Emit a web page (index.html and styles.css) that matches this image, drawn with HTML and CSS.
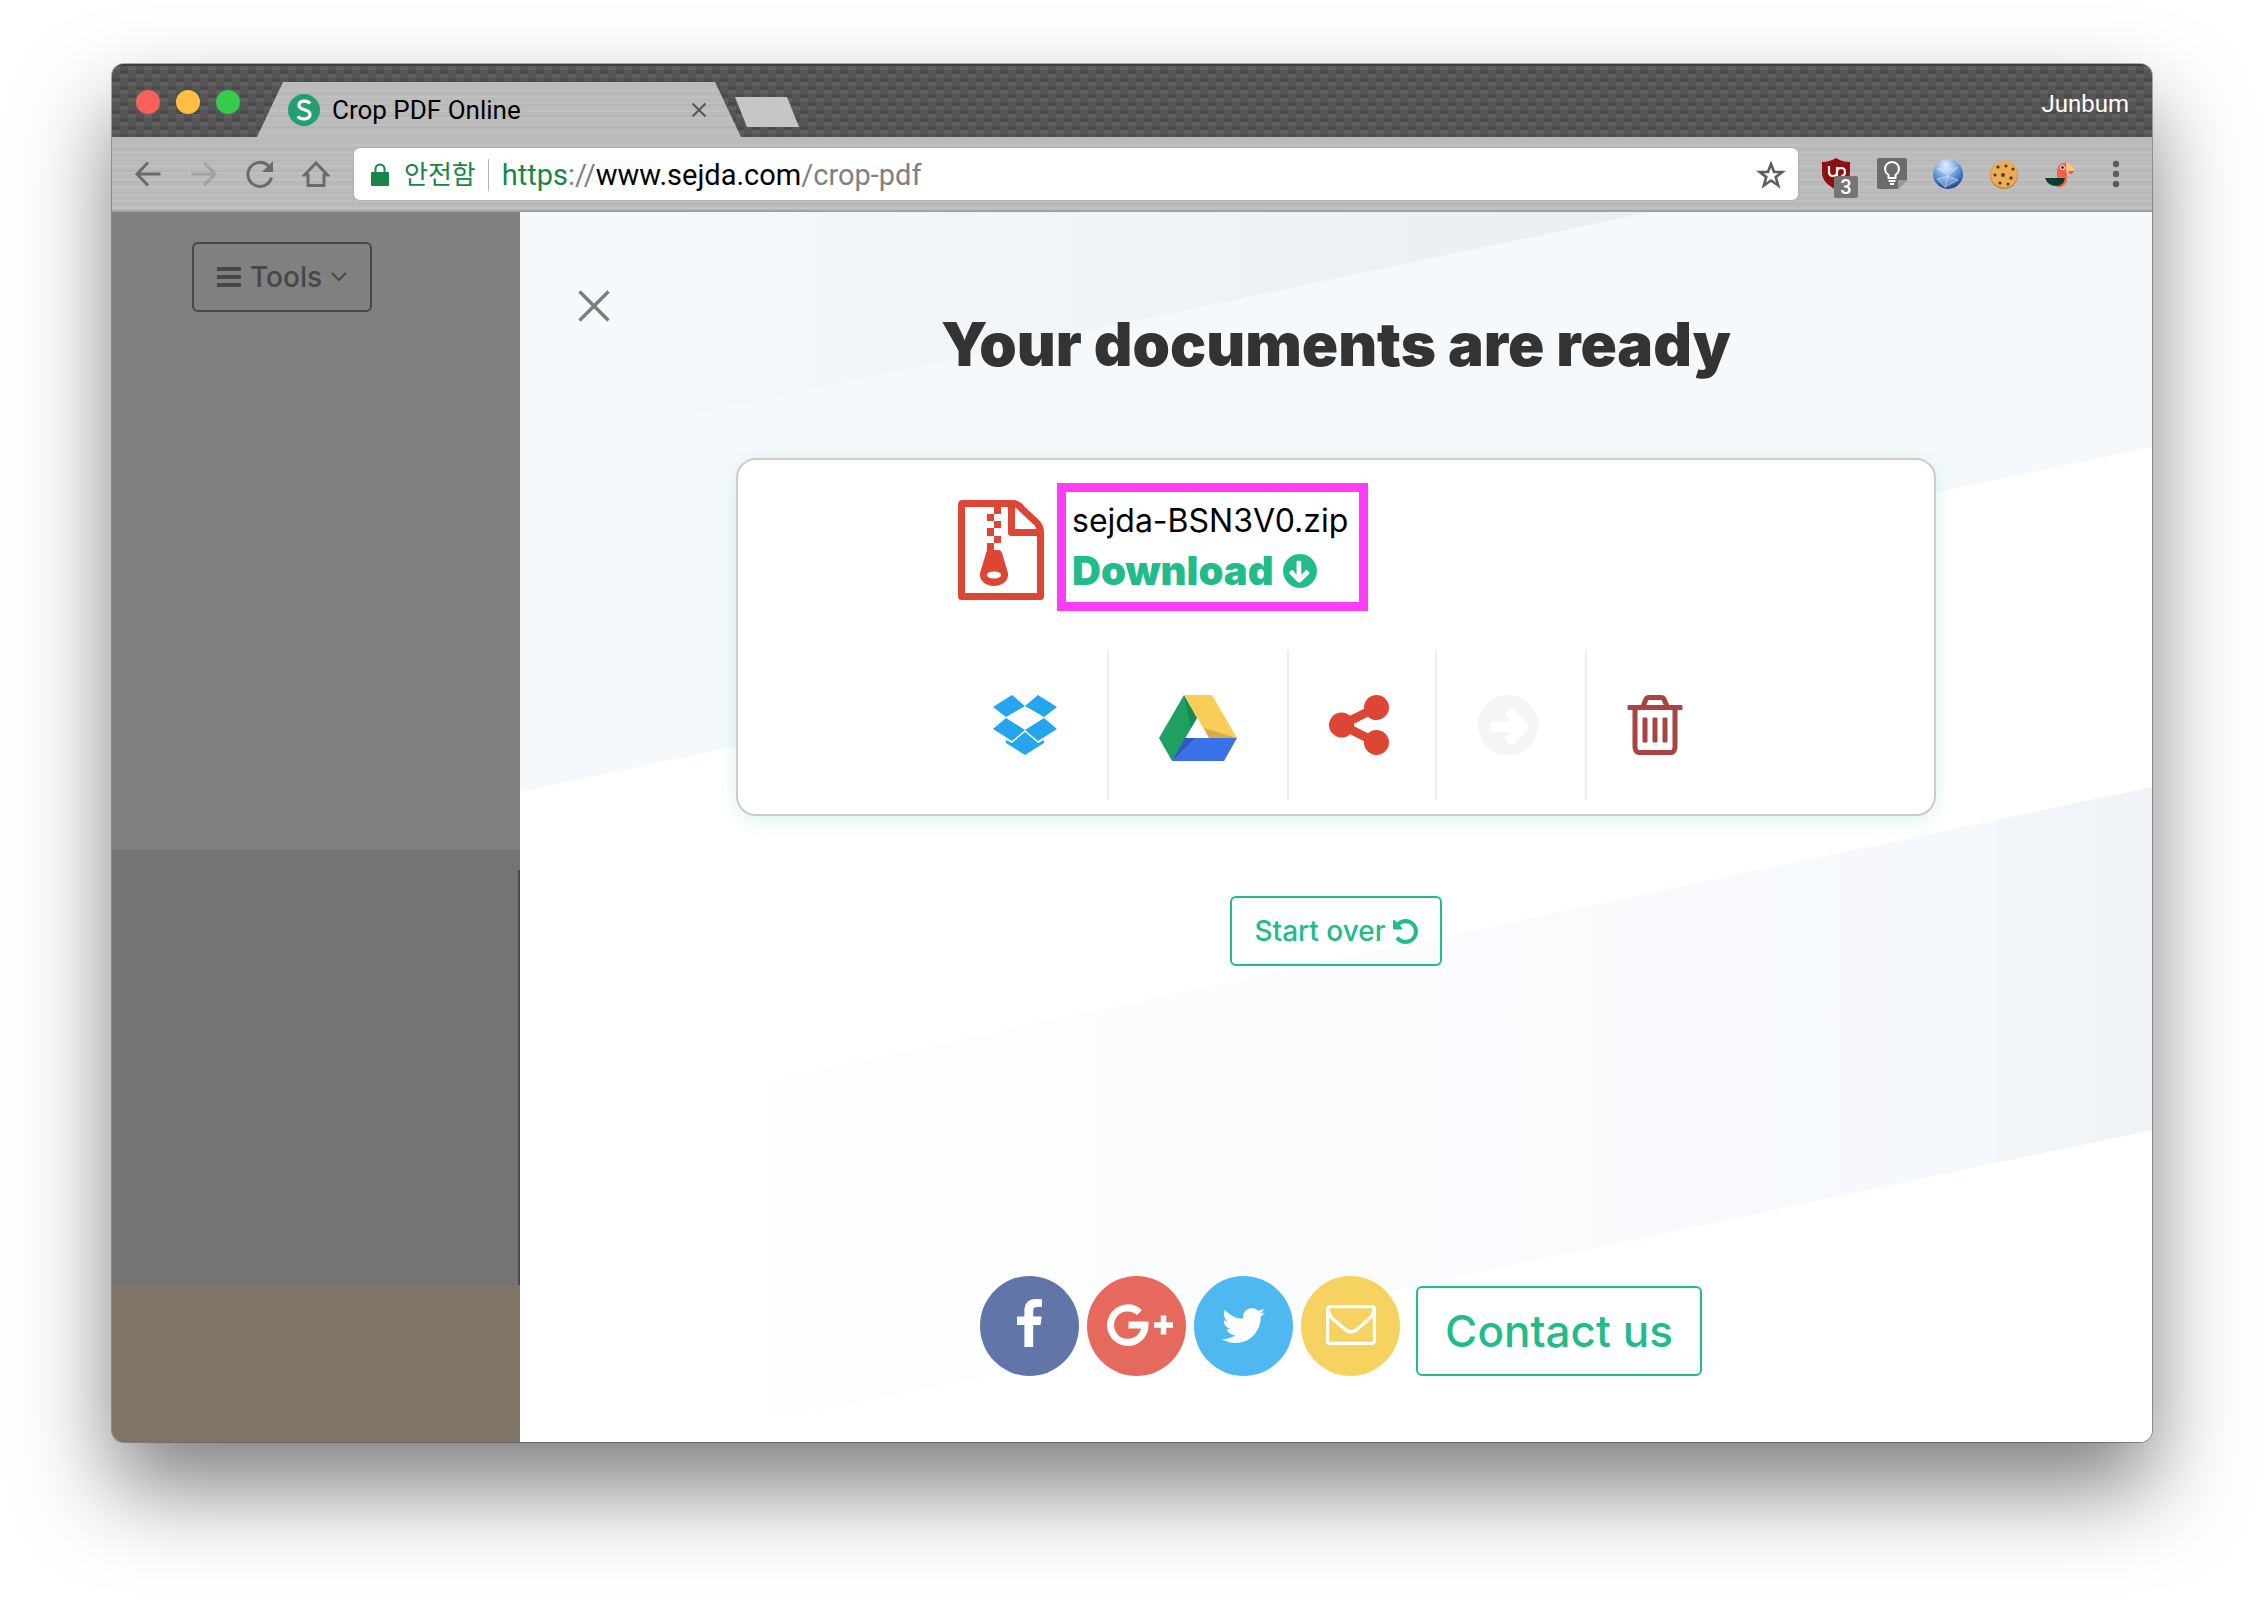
FILE: index.html
```html
<!DOCTYPE html>
<html lang="ko">
<head>
<meta charset="utf-8">
<meta name="viewport" content="width=device-width, initial-scale=1">
<title>Crop PDF Online</title>
<link rel="stylesheet" href="styles.css">
</head>
<body>
<div class="window">
  <header class="tabstrip">
    <div class="lights">
      <button class="light light-close" aria-label="Close window"></button>
      <button class="light light-min" aria-label="Minimize window"></button>
      <button class="light light-max" aria-label="Maximize window"></button>
    </div>
    <div class="tab metal">
      <svg class="favicon" viewBox="0 0 32 32" aria-hidden="true"><circle cx="16" cy="16" r="16" fill="#239f72"/><path d="M22 9.500C19.500 6 11 6 11 11.300C11 17 22 14.500 22 20.300C22 26 12.500 26 10 22.300" fill="none" stroke="#fff" stroke-width="3.200"/></svg>
      <span class="tab-title">Crop PDF Online</span>
      <button class="tab-close" aria-label="Close tab"><svg width="16" height="16" viewBox="0 0 16 16"><path d="M1.500 1.500l13 13M14.500 1.500l-13 13" stroke="#555" stroke-width="2" fill="none"/></svg></button>
    </div>
    <button class="new-tab" aria-label="New tab"></button>
    <span class="profile">Junbum</span>
  </header>

  <nav class="toolbar metal" aria-label="Browser">
    <div class="nav-buttons">
      <button class="nav-btn" aria-label="Back"><svg width="28" height="28" viewBox="0 0 28 28"><path d="M14 2.500L3 14l11 11.500M3 14h23.500"/></svg></button>
      <button class="nav-btn nav-off" aria-label="Forward"><svg width="28" height="28" viewBox="0 0 28 28"><path d="M14 2.500L25 14 14 25.500M25 14H1.500"/></svg></button>
      <button class="nav-btn" aria-label="Reload"><svg width="28" height="28" viewBox="0 0 28 28"><path d="M25.500 17.500A12 12 0 1 1 22.500 6"/><path d="M27 1v11H16z" fill="#6b6b6b" stroke="none"/></svg></button>
      <button class="nav-btn" aria-label="Home"><svg width="28" height="28" viewBox="0 0 28 28"><path d="M14 3L2.500 15H6v10.500h16V15h3.500z"/></svg></button>
    </div>
    <div class="omnibox">
      <svg width="18" height="24" viewBox="0 0 18 24" aria-hidden="true"><rect y="9" width="18" height="14" rx="1" fill="#1a8549"/><path d="M4.500 10V6a4.500 4.500 0 0 1 9 0v4" fill="none" stroke="#1a8549" stroke-width="2"/></svg>
      <span class="secure">안전함</span>
      <span class="url"><span class="url-scheme">https</span>://<span class="url-host">www.sejda.com</span>/crop-pdf</span>
      <button class="star" aria-label="Bookmark"><svg width="30" height="30" viewBox="0 0 30 30"><path d="M15 4l3.100 8h8.200l-6.600 5.100 2.500 8.400L15 20.500l-7.200 5 2.500-8.400L3.700 12h8.200z" fill="none" stroke="#5c5c5c" stroke-width="2.600"/></svg></button>
    </div>
    <div class="extensions">
      <button class="ext" aria-label="uBlock"><svg width="32" height="32" viewBox="0 0 32 32"><path d="M2 4q8 0 14-4q6 4 14 4v10c0 9-6 13-14 18C8 27 2 23 2 14z" fill="#8f100e"/><path d="M9 8v6q0 4 4 4t4-4V9v12M17 14q0-4 4-4t4 4-4 4" fill="none" stroke="#fff" stroke-width="2.200"/></svg><span class="badge">3</span></button>
      <button class="ext" aria-label="Keep"><svg width="32" height="32" viewBox="0 0 32 32"><path d="M3 0h26a2 2 0 0 1 2 2v20l-9 9H3a2 2 0 0 1-2-2V2a2 2 0 0 1 2-2z" fill="#6c6c6c"/><path d="M22 31v-9h9z" fill="#999"/><path d="M12.500 20v-3a7 7 0 1 1 7 0v3zM12.500 23h7M14 26h4" fill="none" stroke="#fff" stroke-width="2"/></svg></button>
      <button class="ext" aria-label="Globe"><svg width="32" height="32" viewBox="0 0 32 32"><defs><radialGradient id="globe" cx=".42" cy=".2" r=".85"><stop offset="0" stop-color="#e6f3ff"/><stop offset=".5" stop-color="#6d9fdf"/><stop offset="1" stop-color="#143a85"/></radialGradient></defs><circle cx="16" cy="16" r="15" fill="url(#globe)"/><path d="M5 10l11 8 10-9M16 18l-3 11M16 18l10 4-13 7-8-8 11-3" fill="#fff" fill-opacity=".25" stroke="#d4e7fa" stroke-opacity=".6"/></svg></button>
      <button class="ext" aria-label="Cookies"><svg width="32" height="32" viewBox="0 0 32 32"><circle cx="16" cy="17" r="14" fill="#c98630"/><circle cx="16" cy="16" r="13.500" fill="#eaad5a"/><g fill="#5e3515"><circle cx="10" cy="9" r="1.600"/><circle cx="18" cy="8" r="1.500"/><circle cx="25" cy="11" r="1.600"/><circle cx="15" cy="17" r="1.900"/><circle cx="7" cy="17" r="1.500"/><circle cx="23" cy="20" r="1.700"/><circle cx="12" cy="25" r="1.600"/><circle cx="20" cy="26" r="1.500"/></g></svg></button>
      <button class="ext" aria-label="Parrot"><svg width="32" height="32" viewBox="0 0 32 32"><path d="M13 29V13a8 8 0 0 1 10-8v16a8 8 0 0 1-10 8z" fill="#ff6240"/><path d="M22 5q8 0 8 9h-8z" fill="#ffbf85"/><path d="M24 13h6q-1 3-4 3z" fill="#f4503a"/><path d="M1 20h20q-1 8-9 8T1 20z" fill="#063f31"/><circle cx="18.500" cy="9.500" r="2" fill="#333" stroke="#fff"/></svg></button>
      <button class="ext" aria-label="Menu"><svg width="32" height="32" viewBox="0 0 32 32"><g fill="#5b5b5b"><circle cx="16" cy="6" r="3.200"/><circle cx="16" cy="16" r="3.200"/><circle cx="16" cy="26" r="3.200"/></g></svg></button>
    </div>
  </nav>

  <div class="page">
    <aside class="backdrop">
      <div class="backdrop-top">
        <button class="tools"><svg width="24" height="22" viewBox="0 0 24 22" aria-hidden="true"><path d="M0 3h24M0 11h24M0 19h24" stroke="#474747" stroke-width="4"/></svg>Tools<svg width="16" height="10" viewBox="0 0 16 10" aria-hidden="true"><path d="M1 1l7 7 7-7" fill="none" stroke="#474747" stroke-width="2"/></svg></button>
      </div>
      <div class="backdrop-mid"></div>
      <div class="backdrop-foot"></div>
    </aside>

    <main class="panel">
      <svg class="stripes" viewBox="0 0 1632 1230" preserveAspectRatio="none" aria-hidden="true">
        <defs>
          <linearGradient id="fadeTop" gradientUnits="userSpaceOnUse" x1="80" y1="0" x2="1130" y2="0"><stop offset="0" stop-color="#f5f9fc"/><stop offset="1" stop-color="#eaedf2"/></linearGradient>
          <linearGradient id="fadeLow" gradientUnits="userSpaceOnUse" x1="150" y1="0" x2="1632" y2="0"><stop offset="0" stop-color="#fff"/><stop offset=".5" stop-color="#fafbfd"/><stop offset=".895" stop-color="#f5f8fc"/><stop offset=".895" stop-color="#f2f5fa"/><stop offset="1" stop-color="#eff3f8"/></linearGradient>
        </defs>
        <path d="M0 0H1632V235L0 580z" fill="#f5f9fc"/>
        <path d="M0 0H1130L80 222H0z" fill="url(#fadeTop)"/>
        <path d="M1632 575V918L0 1263V920z" fill="url(#fadeLow)"/>
      </svg>
      <button class="dismiss" aria-label="Close"><svg width="32" height="32" viewBox="0 0 32 32"><path d="M1.500 1.500l29 29M30.500 1.500l-29 29" stroke="#7d7d7d" stroke-width="3.500"/></svg></button>

      <h1 class="heading">Your documents are ready</h1>

      <section class="card">
        <div class="file">
          <svg class="file-icon" width="86" height="106" viewBox="0 -6 86 106" aria-hidden="true">
            <path d="M4 3.500H56Q60 4 64 9L79 23Q82.500 27 82.500 32V96.500H3.500V4z" fill="none" stroke="#dd4534" stroke-width="7" stroke-linejoin="round"/>
            <path d="M53.500 4V32.500H82" fill="none" stroke="#dd4534" stroke-width="7" stroke-linejoin="round"/>
            <path d="M36 7h7v7h-7zM29 14h7v7h-7zM36 21h7v7h-7zM29 28h7v8h-7zM36 36h7v7h-7zM29 43h7v7h-7z" fill="#dd4534"/>
            <path d="M29 50h12q2 0 3 3l6 20c1 8-6 13-14 13s-15-5-14-13zM36 71.500c-4 0-7 1.500-7 3.500s3 3.500 7 3.500 7-1.500 7-3.500-3-3.500-7-3.500z" fill="#dd4534" fill-rule="evenodd"/>
          </svg>
          <div class="file-box">
            <div class="file-name">sejda-BSN3V0.zip</div>
            <a class="download" href="#download">Download<svg width="34" height="34" viewBox="128 128 1536 1536" aria-hidden="true"><path transform="rotate(90 896 896)" fill="#22bb8a" d="M1413 896q0-27-18-45l-362-362q-18-18-45-18t-45 18l-70 70q-18 18-18 45t18 45l190 190h-570q-26 0-45 19t-19 45v86q0 26 19 45t45 19h570l-190 150q-18 18-18 45t18 45l70 70q18 18 45 18t45-18l362-362q18-18 18-45zm251 0q0 209-103 385.500t-279.500 279.500-385.500 103-385.500-103-279.500-279.500-103-385.500 103-385.500 279.500-279.500 385.500-103 385.500 103 279.500 279.500 103 385.500z"/></svg></a>
          </div>
        </div>
        <div class="actions">
          <button class="action action-wide" aria-label="Save to Dropbox"><svg width="64" height="60" viewBox="0 0 64 60"><path fill="#24a5ee" d="M19 0L32 11 13 22 0 12zM45 0L32 11 51 22 64 12zM13 23L32 35 19 46 0 34zM51 23L32 35 45 46 64 34zM32 37L45 48 51 45V48L32 60 13 48V45L19 48z"/></svg></button>
          <button class="action action-wide" aria-label="Save to Google Drive"><svg width="78" height="60" viewBox="0 4 78 60" overflow="visible"><path fill="#1fa060" d="M25 4l13 23-25 43L0 47z"/><path fill="#16804c" fill-opacity=".7" d="M25 4l13 23-6 10z"/><path fill="#f8cd58" d="M25 4h28l25 43H50z"/><path fill="#d7ad48" d="M45 37l33 10H50z"/><path fill="#3972e8" d="M26 47h52L65 70H13z"/><path fill="#2b59bd" d="M26 47h10L13 70z"/></svg></button>
          <button class="action" aria-label="Share"><svg width="60" height="60" viewBox="128 128 1536 1536"><path fill="#dd4534" d="M1344 1024q133 0 226.500 93.500t93.500 226.500-93.500 226.500-226.500 93.500-226.500-93.500-93.500-226.500q0-12 2-34l-360-180q-92 86-218 86-133 0-226.500-93.500t-93.500-226.500 93.500-226.500 226.500-93.500q126 0 218 86l360-180q-2-22-2-34 0-133 93.500-226.500t226.500-93.500 226.500 93.500 93.500 226.500-93.500 226.500-226.500 93.500q-126 0-218-86l-360 180q2 22 2 34t-2 34l360 180q92-86 218-86z"/></svg></button>
          <button class="action" aria-label="Continue" disabled><svg width="62" height="60" viewBox="128 128 1536 1536"><path fill="#f5f5f5" d="M1413 896q0-27-18-45l-362-362q-18-18-45-18t-45 18l-91 91q-18 18-18 45t18 45l141 141h-502q-26 0-45 19t-19 45v128q0 26 19 45t45 19h502l-141 141q-18 18-18 45t18 45l91 91q18 18 45 18t45-18l362-362q18-18 18-45zm251 0q0 209-103 385.500t-279.500 279.500-385.500 103-385.500-103-279.500-279.500-103-385.500 103-385.500 279.500-279.500 385.500-103 385.500 103 279.500 279.500 103 385.500z"/></svg></button>
          <button class="action" aria-label="Delete"><svg width="56" height="60" viewBox="180 128 1432 1536"><path fill="#a94444" d="M704 736v576q0 14-9 23t-23 9h-64q-14 0-23-9t-9-23v-576q0-14 9-23t23-9h64q14 0 23 9t9 23zm256 0v576q0 14-9 23t-23 9h-64q-14 0-23-9t-9-23v-576q0-14 9-23t23-9h64q14 0 23 9t9 23zm256 0v576q0 14-9 23t-23 9h-64q-14 0-23-9t-9-23v-576q0-14 9-23t23-9h64q14 0 23 9t9 23zm128 724v-948h-896v948q0 22 7 40.500t14.500 27 10.500 8.500h832q3 0 10.500-8.500t14.500-27 7-40.500zm-672-1076h448l-48-117q-7-9-17-11h-317q-10 2-17 11zm928 32v64q0 14-9 23t-23 9h-96v948q0 83-47 143.500t-113 60.500h-832q-66 0-113-58.500t-47-141.500v-952h-96q-14 0-23-9t-9-23v-64q0-14 9-23t23-9h309l70-167q15-37 54-63t79-26h320q40 0 79 26t54 63l70 167h309q14 0 23 9t9 23z"/></svg></button>
        </div>
      </section>

      <button class="outline restart">Start over<svg width="25" height="25" viewBox="128 128 1536 1536" aria-hidden="true"><path fill="#22bb8a" d="M1664 896q0 156-61 298t-164 245-245 164-298 61q-172 0-327-72.500t-264-204.500q-7-10-6.500-22.500t8.500-20.500l137-138q10-9 25-9 16 2 23 12 73 95 179 147t225 52q104 0 198.500-40.500t163.500-109.500 109.500-163.500 40.500-198.500-40.500-198.500-109.500-163.500-163.500-109.500-198.500-40.500q-98 0-188 35.500t-160 101.500l137 138q31 30 14 69-17 40-59 40h-448q-26 0-45-19t-19-45v-448q0-42 40-59 39-17 69 14l130 129q107-101 244.500-156.500t284.500-55.500q156 0 298 61t245 164 164 245 61 298z"/></svg></button>

      <footer class="social">
        <a class="bubble facebook" href="#facebook" aria-label="Facebook"><svg width="25" height="48" viewBox="479 0 864 1664"><path fill="#fff" d="M1343 12v264h-157q-86 0-116 36t-30 108v189h293l-39 296h-254v759h-306v-759h-255v-296h255v-218q0-186 104-288.500t277-102.500q147 0 228 12z"/></svg></a>
        <a class="bubble google" href="#google" aria-label="Google Plus"><svg width="66" height="42" viewBox="0 0 66 42"><path d="M32.500 8.500A17.200 17.200 0 1 0 38 21H21.500" fill="none" stroke="#fff" stroke-width="7"/><path d="M47 21h19M56.500 11.500v19" stroke="#fff" stroke-width="5.500"/></svg></a>
        <a class="bubble twitter" href="#twitter" aria-label="Twitter"><svg width="43" height="35" viewBox="108 256 1576 1280"><path fill="#fff" d="M1684 408q-67 98-162 167 1 14 1 42 0 130-38 259.500t-115.500 248.500-184.500 210.500-258 146-323 54.500q-271 0-496-145 35 4 78 4 225 0 401-138-105-2-188-64.500t-114-159.500q33 5 61 5 43 0 85-11-112-23-185.500-111.500t-73.500-205.500v-4q68 38 146 41-66-44-105-115t-39-154q0-88 44-163 121 149 294.500 238.500t371.500 99.500q-8-38-8-74 0-134 94.500-228.500t228.500-94.500q140 0 236 102 109-21 205-78-37 115-142 178 93-10 186-50z"/></svg></a>
        <a class="bubble mail" href="#mail" aria-label="Email"><svg width="50" height="40" viewBox="0 0 50 40"><rect x="1.500" y="1.500" width="47" height="37" rx="3" fill="none" stroke="#fff" stroke-width="3.400"/><path d="M2 3q0 7 6 12l12 10q5 3.500 10 0L42 15q6-5 6-12" fill="none" stroke="#fff" stroke-width="3.400"/></svg></a>
        <button class="outline contact">Contact us</button>
      </footer>
    </main>
  </div>
</div>
</body>
</html>
```

FILE: styles.css
```css
* { box-sizing: border-box; }

body {
  margin: 0;
  min-height: 100vh;
  padding: 64px 112px 160px;
  display: flex;
  flex-direction: column;
  background: #fff;
  font-family: Inter, "Noto Sans", sans-serif;
}

button {
  margin: 0;
  padding: 0;
  border: 0;
  background: none;
  font: inherit;
  color: inherit;
}

svg { display: block; flex: none; }

.window {
  flex: 1;
  display: flex;
  flex-direction: column;
  border-radius: 12px;
  overflow: hidden;
  box-shadow: 0 0 0 1px rgba(0, 0, 0, .3), 0 46px 90px rgba(0, 0, 0, .5);
}

/* Browser frame */
.tabstrip {
  display: flex;
  align-items: flex-end;
  height: 73px;
  padding-left: 24px;
  border-top: 2px solid #3a3f3c;
  background-color: #555;
  background-image:
    repeating-linear-gradient(rgba(255, 255, 255, .06) 0 4px, transparent 4px 8px),
    repeating-conic-gradient(#4a4a4a 0 25%, #565656 0 50%);
  background-size: auto, 16px 16px;
  font-family: Roboto, "Noto Sans CJK KR", sans-serif;
}

.lights { display: flex; gap: 16px; align-self: center; margin-right: 17px; }
.light { width: 24px; height: 24px; border-radius: 50%; }
.light-close { background: #fc605b; }
.light-min { background: #fdbe41; }
.light-max { background: #35cc4b; }

.metal {
  background-color: #bbb;
  background-image:
    repeating-linear-gradient(rgba(255, 255, 255, .08) 0 2px, transparent 2px 7px),
    repeating-linear-gradient(rgba(0, 0, 0, .03) 0 2px, transparent 2px 11px);
}

.tab {
  width: 484px;
  height: 55px;
  padding: 0 34px 0 31px;
  display: flex;
  align-items: center;
  gap: 12px;
  clip-path: polygon(0 100%, 26px 0, calc(100% - 26px) 0, 100% 100%);
}
.favicon { width: 32px; height: 32px; }
.tab-title { flex: 1; font-size: 26px; line-height: 32px; color: #000; }

.new-tab {
  width: 64px;
  height: 30px;
  margin: 0 auto 10px -6px;
  background: #c6c6c6;
  clip-path: polygon(0 0, 52px 0, 100% 100%, 12px 100%);
}

.profile {
  align-self: center;
  margin-right: 23px;
  padding-top: 4px;
  font-size: 24px;
  line-height: 32px;
  color: #fff;
}

.toolbar {
  display: flex;
  align-items: center;
  height: 75px;
  padding: 0 20px 0 22px;
  border-bottom: 2px solid #a2a2a2;
  font-family: Roboto, "Noto Sans CJK KR", sans-serif;
}

.nav-buttons { display: flex; gap: 28px; margin-right: 24px; }
.nav-btn svg { fill: none; stroke: #6b6b6b; stroke-width: 3; }
.nav-off { opacity: .3; }

.omnibox {
  flex: 1;
  display: flex;
  align-items: center;
  height: 52px;
  padding: 2px 12px 0 17px;
  border-radius: 6px;
  background: #fff;
  box-shadow: 0 0 0 1px rgba(0, 0, 0, .08);
}
.secure {
  margin-left: 15px;
  padding-right: 12px;
  border-right: 1px solid #b3b3b3;
  font-size: 26px;
  line-height: 32px;
  color: #1a8549;
}
.url { flex: 1; margin-left: 13px; font-size: 29px; line-height: 36px; color: #808080; }
.url-scheme { color: #1a8549; }
.url-host { color: #000; }

.extensions { display: flex; gap: 24px; margin-left: 22px; }
.ext { position: relative; width: 32px; height: 32px; }
.badge {
  position: absolute;
  left: 14px;
  top: 18px;
  width: 24px;
  height: 22px;
  border-radius: 2px;
  background: #757575;
  font-size: 20px;
  font-weight: 500;
  line-height: 22px;
  text-align: center;
  color: #fff;
}

/* Page content */
.page { flex: 1; display: grid; grid-template-columns: 20% 1fr; }

.backdrop { display: flex; flex-direction: column; background: #808080; }
.backdrop-top { flex: 1; padding: 30px 80px; }
.backdrop-mid {
  height: 435px;
  background: linear-gradient(#4a4a4a, #4a4a4a) right bottom / 2px calc(100% - 20px) no-repeat #747474;
}
.backdrop-foot { height: 157px; background: #807467; }

.tools {
  display: flex;
  align-items: center;
  justify-content: center;
  width: 180px;
  height: 70px;
  gap: 9px;
  border: 2px solid #474747;
  border-radius: 6px;
  font-size: 28px;
  font-weight: 500;
  color: #474747;
}

.panel {
  position: relative;
  display: flex;
  flex-direction: column;
  align-items: center;
  padding: 96px 40px 66px;
  background: #fff;
}
.panel > * { position: relative; }
.panel > .stripes { position: absolute; inset: 0; width: 100%; height: 100%; }
.panel > .dismiss { position: absolute; left: 58px; top: 78px; }

.heading { margin: 0; font-size: 60px; font-weight: 900; line-height: 72px; color: #333; }

.card {
  width: 100%;
  max-width: 1200px;
  margin-top: 78px;
  padding: 23px 0 14px;
  border: 2px solid #ccc;
  border-radius: 20px;
  background: #fff;
  box-shadow: 0 4px 20px rgba(34, 187, 138, .16);
}

.file { display: flex; align-items: center; gap: 13px; padding-left: 220px; }
.file-box {
  width: 311px;
  padding: 5px 6px;
  border: 9px solid #ff3df8;
  white-space: nowrap;
}
.file-name { font-size: 32px; line-height: 48px; color: #000; }
.download {
  display: flex;
  align-items: center;
  gap: 10px;
  font-size: 40px;
  font-weight: 900;
  line-height: 52px;
  color: #22bb8a;
  text-decoration: none;
}

.actions { display: flex; justify-content: center; margin-top: 39px; }
.action {
  height: 150px;
  padding: 0 46px 0 40px;
  border-right: 2px solid #ededed;
}
.action-wide { padding: 0 50px; }
.action:last-child { border-right: 0; }

.outline {
  border: 2px solid #22bb8a;
  border-radius: 6px;
  color: #22bb8a;
  font-weight: 500;
}
.restart {
  display: flex;
  align-items: center;
  justify-content: center;
  width: 212px;
  height: 70px;
  gap: 7px;
  margin-top: 80px;
  font-size: 28px;
}

.social {
  display: flex;
  align-items: flex-end;
  gap: 8px;
  margin-top: auto;
  padding-left: 10px;
}
.bubble {
  display: flex;
  align-items: center;
  justify-content: center;
  width: 99px;
  height: 100px;
  padding-bottom: 2px;
  border-radius: 50%;
}
.facebook { background: #6175a9; padding-bottom: 6px; }
.google { background: #e56a5d; padding-left: 6px; }
.twitter { background: #50b8f1; }
.mail { background: #f6d361; }
.contact { width: 286px; height: 90px; margin-left: 8px; font-size: 44px; }
```
